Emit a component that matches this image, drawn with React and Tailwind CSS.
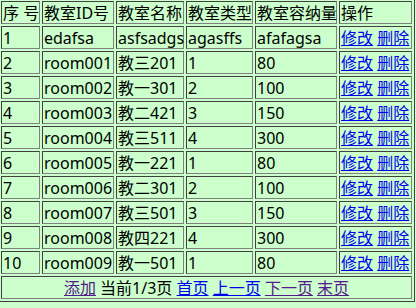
import React from "react";

const rows = [
  ["1", "edafsa", "asfsadgs", "agasffs", "afafagsa"],
  ["2", "room001", "教三201", "1", "80"],
  ["3", "room002", "教一301", "2", "100"],
  ["4", "room003", "教二421", "3", "150"],
  ["5", "room004", "教三511", "4", "300"],
  ["6", "room005", "教一221", "1", "80"],
  ["7", "room006", "教二301", "2", "100"],
  ["8", "room007", "教三501", "3", "150"],
  ["9", "room008", "教四221", "4", "300"],
  ["10", "room009", "教一501", "1", "80"],
];

const td =
  "border border-t-[#404040] border-l-[#404040] border-b-[#808080] border-r-[#808080] px-px pt-[2px] pb-0 leading-[19px] align-middle whitespace-nowrap text-left font-normal";

export default function App() {
  return (
    <div
      className="min-h-screen bg-[#ccffcc] text-black text-[16px] overflow-hidden"
      style={{ fontFamily: '"Noto Sans", "Noto Sans CJK SC", sans-serif' }}
    >
      <table className="-mt-[2px] -ml-[2px] table-fixed border-separate border-spacing-[2px] border border-t-[#808080] border-l-[#808080] border-b-[#404040] border-r-[#404040] w-[417px]">
        <colgroup>
          <col className="w-[39px]" />
          <col className="w-[72px]" />
          <col className="w-[68px]" />
          <col className="w-[67px]" />
          <col className="w-[82px]" />
          <col className="w-[73px]" />
        </colgroup>
        <tbody>
          <tr>
            <td className={td}>序 号</td>
            <td className={td}>教室ID号</td>
            <td className={td}>教室名称</td>
            <td className={td}>教室类型</td>
            <td className={td}>教室容纳量</td>
            <td className={td}>操作</td>
          </tr>
          {rows.map((r) => (
            <tr key={r[0]}>
              {r.map((c, i) => (
                <td key={i} className={td}>
                  {c}
                </td>
              ))}
              <td className={td}>
                <a href="#" className="text-[#0000ee] underline">修改</a>{" "}
                <a href="#" className="text-[#0000ee] underline">删除</a>
              </td>
            </tr>
          ))}
          <tr>
            <td colSpan={6} className={td + " !text-center"}>
              <a href="#" className="text-[#551a8b] underline">添加</a> 当前1/3页{" "}
              <a href="#" className="text-[#0000ee] underline">首页</a>{" "}
              <a href="#" className="text-[#0000ee] underline">上一页</a>{" "}
              <a href="#" className="text-[#551a8b] underline">下一页</a>{" "}
              <a href="#" className="text-[#551a8b] underline">末页</a>
            </td>
          </tr>
        </tbody>
      </table>
    </div>
  );
}
